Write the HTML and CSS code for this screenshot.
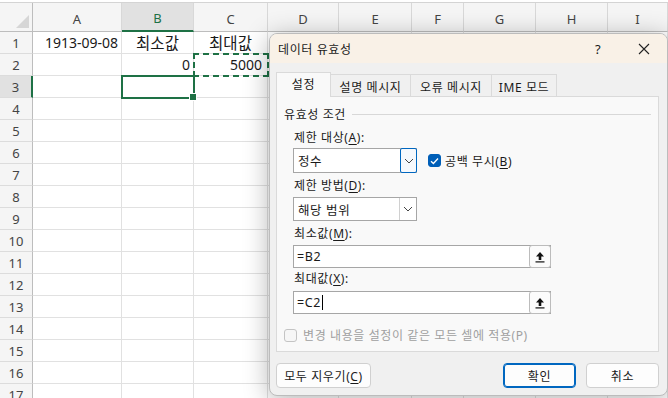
FILE: index.html
```html
<!DOCTYPE html>
<html lang="ko">
<head>
  <meta charset="UTF-8" />
  <title>데이터 유효성</title>
  <link rel="stylesheet" href="styles.css">
</head>
<body>
  <!-- Worksheet grid (filled by the script below) -->
  <div class="sheet"></div>

  <!-- Data validation dialog -->
  <div class="dialog">
    <div class="titlebar">
      <span class="title">데이터 유효성</span>
      <span class="title-btn">?</span>
      <span class="title-btn">
        <svg width="12" height="12" viewBox="0 0 12 12"><path d="M1 1 L11 11 M11 1 L1 11" stroke="#222" stroke-width="1.1" fill="none"/></svg>
      </span>
    </div>

    <div class="tabs">
      <div class="tab active" style="width:55px">설정</div>
      <div class="tab" style="width:80px">설명 메시지</div>
      <div class="tab" style="width:81px">오류 메시지</div>
      <div class="tab" style="width:65px">IME 모드</div>
    </div>

    <div class="panel">
      <div class="group-title"><span>유효성 조건</span><span class="rule"></span></div>

      <div class="field-label first">제한 대상(<u>A</u>):</div>
      <div class="combo-row">
        <div class="combo focus">
          <span class="combo-text">정수</span>
          <span class="combo-btn">
            <svg width="10" height="6" viewBox="0 0 10 6"><path d="M1 1 L5 5 L9 1" stroke="#444" stroke-width="1" fill="none"/></svg>
          </span>
        </div>
        <label class="check">
          <span class="box checked">
            <svg width="9" height="8" viewBox="0 0 9 8"><path d="M1 4.2 L3.4 6.5 L8 1.5" stroke="#fff" stroke-width="1.3" fill="none"/></svg>
          </span>
          <span>공백 무시(<u>B</u>)</span>
        </label>
      </div>

      <div class="field-label">제한 방법(<u>D</u>):</div>
      <div class="combo short">
        <span class="combo-text">해당 범위</span>
        <span class="combo-btn">
          <svg width="10" height="6" viewBox="0 0 10 6"><path d="M1 1 L5 5 L9 1" stroke="#444" stroke-width="1" fill="none"/></svg>
        </span>
      </div>

      <div class="field-label">최소값(<u>M</u>):</div>
      <div class="ref-input">
        <span class="ref-text">=B2</span>
        <span class="ref-btn">
          <svg width="12" height="12" viewBox="0 0 12 12"><path d="M6 1 L10 5.5 H7.3 V9 H4.7 V5.5 H2 Z" fill="#111"/><rect x="1.5" y="10.3" width="9" height="1.2" fill="#111"/></svg>
        </span>
      </div>

      <div class="field-label tight">최대값(<u>X</u>):</div>
      <div class="ref-input second">
        <span class="ref-text">=C2<span class="caret"></span></span>
        <span class="ref-btn">
          <svg width="12" height="12" viewBox="0 0 12 12"><path d="M6 1 L10 5.5 H7.3 V9 H4.7 V5.5 H2 Z" fill="#111"/><rect x="1.5" y="10.3" width="9" height="1.2" fill="#111"/></svg>
        </span>
      </div>

      <label class="check disabled">
        <span class="box"></span>
        <span>변경 내용을 설정이 같은 모든 셀에 적용(P)</span>
      </label>
    </div>

    <div class="footer">
      <button class="btn wide">모두 지우기(<u>C</u>)</button>
      <span class="spacer"></span>
      <button class="btn primary">확인</button>
      <button class="btn">취소</button>
    </div>
  </div>

  <script>
    // Build the worksheet: column headers, row headers and cells.
    const cols = ['A', 'B', 'C', 'D', 'E', 'F', 'G', 'H', 'I'];
    const data = {
      A1: { text: '1913-09-08', align: 'right' },
      B1: { text: '최소값', align: 'center', kr: true },
      C1: { text: '최대값', align: 'center', kr: true },
      B2: { text: '0', align: 'right' },
      C2: { text: '5000', align: 'right' }
    };
    let html = '<div class="corner"><span class="corner-tri"></span></div>';
    cols.forEach(c => {
      html += `<div class="col-head${c === 'B' ? ' active' : ''}">${c}</div>`;
    });
    for (let r = 1; r <= 17; r++) {
      html += `<div class="row-head${r === 3 ? ' active' : ''}">${r}</div>`;
      cols.forEach(c => {
        const key = c + r;
        const cell = data[key];
        let cls = 'cell';
        if (cell) cls += ' ' + cell.align + (cell.kr ? ' kr' : '');
        if (key === 'B3') cls += ' selected';
        if (key === 'C2') cls += ' copied';
        html += `<div class="${cls}">${cell ? cell.text : ''}</div>`;
      });
    }
    document.querySelector('.sheet').innerHTML = html;
  </script>
</body>
</html>
```

FILE: styles.css
```css
* {
  box-sizing: border-box;
}
body {
  margin: 0;
  width: 668px;
  height: 398px;
  overflow: hidden;
  background: #fff;
  font-family: "Noto Sans", "Noto Sans CJK KR", sans-serif;
  color: #1a1a1a;
}

/* Worksheet */
.sheet {
  margin-top: 2px;
  border-top: 1px solid #d4d4d4;
  display: grid;
  grid-template-columns: 33px 89px 72px 74px 71px 73px 52px 72px 72px 60px;
  grid-template-rows: 29px;
  grid-auto-rows: 22px;
  font-size: 14px;
}
.corner,
.col-head,
.row-head {
  background: #f5f5f5;
  color: #444;
  font-size: 13px;
  display: flex;
  align-items: center;
  justify-content: center;
}
.corner {
  position: relative;
  border-right: 1px solid #bdbdbd;
  border-bottom: 1px solid #bdbdbd;
}
.corner-tri {
  position: absolute;
  right: 3px;
  bottom: 3px;
  width: 0;
  height: 0;
  border-left: 13px solid transparent;
  border-bottom: 13px solid #d6d6d6;
}
.col-head {
  border-right: 1px solid #d8d8d8;
  border-bottom: 1px solid #bdbdbd;
  padding-top: 3px;
}
.col-head.active {
  background: #e1e1e1;
  color: #1e7145;
  border-bottom: 2px solid #1e7145;
}
.row-head {
  border-right: 1px solid #bdbdbd;
  border-bottom: 1px solid #dcdcdc;
}
.row-head.active {
  background: #e1e1e1;
  border-right: 2px solid #1e7145;
}
.cell {
  border-right: 1px solid #e1e1e1;
  border-bottom: 1px solid #e1e1e1;
  display: flex;
  align-items: center;
  padding: 0 3px;
  white-space: nowrap;
}
.cell.right {
  justify-content: flex-end;
}
.cell.center {
  justify-content: center;
}
.cell.kr {
  font-size: 15.5px;
}
.cell.selected {
  position: relative;
  z-index: 1;
  outline: 2px solid #1e7145;
  outline-offset: -1px;
}
.cell.selected::after {
  content: "";
  position: absolute;
  right: -4px;
  bottom: -4px;
  width: 6px;
  height: 6px;
  background: #1e7145;
  border: 1px solid #fff;
}
.cell.copied {
  position: relative;
  z-index: 1;
  outline: 2px dashed #1e7145;
  outline-offset: -1px;
  padding-right: 5px;
}

/* Dialog window */
.dialog {
  position: absolute;
  left: 269px;
  top: 33px;
  width: 399px;
  height: 363px;
  background: #f0f0f0;
  border: 1px solid #bcbcbc;
  border-radius: 8px;
  box-shadow: 0 4px 26px rgba(0, 0, 0, 0.3);
  padding: 0 8px 0 6px;
  font-size: 12px;
  letter-spacing: 0.6px;
  z-index: 5;
  display: flex;
  flex-direction: column;
}
.titlebar {
  height: 29px;
  margin: 0 -8px 0 -6px;
  background: #f9f1e7;
  border-radius: 7px 7px 0 0;
  display: flex;
  align-items: center;
  padding-left: 8px;
}
.title {
  flex: 1;
}
.title-btn {
  width: 46px;
  height: 29px;
  display: flex;
  align-items: center;
  justify-content: center;
  font-size: 13px;
}

/* Tabs */
.tabs {
  margin-top: 9px;
  display: flex;
  align-items: flex-end;
  position: relative;
  z-index: 1;
  margin-bottom: -1px;
}
.tab {
  height: 23px;
  border: 1px solid #dadada;
  border-bottom: none;
  border-left: none;
  display: flex;
  align-items: center;
  justify-content: center;
  padding-top: 1px;
}
.tab.active {
  height: 25px;
  background: #f9f9f9;
  border-left: 1px solid #dadada;
  padding-top: 0;
  padding-bottom: 2px;
}

.panel {
  background: #f9f9f9;
  border: 1px solid #dadada;
  height: 256px;
  padding: 9px 7px 0 7px;
}
.group-title {
  display: flex;
  align-items: center;
  height: 16px;
}
.rule {
  flex: 1;
  height: 1px;
  background: #d8d8d8;
  margin-left: 6px;
}
.field-label {
  margin: 5px 0 0 10px;
  height: 16px;
  line-height: 16px;
}
.field-label.first {
  margin-top: 8px;
}
.field-label.tight {
  margin-top: 3px;
}

.combo-row {
  display: flex;
  align-items: center;
  margin: 2px 0 0 9px;
}
.combo {
  width: 124px;
  height: 25px;
  background: #fff;
  border: 1px solid #a6a6a6;
  display: flex;
  align-items: stretch;
}
.combo.short {
  height: 24px;
  margin: 3px 0 0 9px;
}
.combo-text {
  flex: 1;
  padding-left: 4px;
  display: flex;
  align-items: center;
  font-size: 12.5px;
}
.combo-btn {
  width: 17px;
  border-left: 1px solid #d0d0d0;
  display: flex;
  align-items: center;
  justify-content: center;
}
.combo.focus .combo-btn {
  border: 1px solid #0067c0;
  border-radius: 2px;
  margin: -1px -1px -1px 0;
  background: #f6f9fd;
}

.check {
  display: flex;
  align-items: center;
  gap: 4px;
  margin-left: 11px;
}
.box {
  width: 13px;
  height: 13px;
  border-radius: 3px;
  border: 1px solid #c4c4c4;
  background: #f6f6f6;
  display: flex;
  align-items: center;
  justify-content: center;
}
.box.checked {
  background: #005fb8;
  border-color: #005fb8;
}
.check.disabled {
  color: #a0a0a0;
  margin: 12px 0 0 0;
  gap: 6px;
}

.ref-input {
  width: 258px;
  height: 23px;
  margin: 3px 0 0 9px;
  background: #fff;
  border: 1px solid #a6a6a6;
  display: flex;
  align-items: stretch;
}
.ref-input.second {
  margin-top: 4px;
}
.ref-text {
  flex: 1;
  display: flex;
  align-items: center;
  padding-left: 3px;
  font-size: 12.5px;
}
.caret {
  display: inline-block;
  width: 1px;
  height: 15px;
  background: #000;
  margin-left: 1px;
}
.ref-btn {
  width: 22px;
  margin: -1px -1px -1px 0;
  border: 1px solid #bcbcbc;
  border-radius: 3px;
  background: #fbfbfb;
  display: flex;
  align-items: center;
  justify-content: center;
}

/* Footer buttons */
.footer {
  margin-top: 11px;
  display: flex;
  gap: 10px;
}
.spacer {
  flex: 1;
}
.btn {
  width: 73px;
  height: 25px;
  background: #fdfdfd;
  border: 1px solid #d0d0d0;
  border-radius: 4px;
  font-family: "Noto Sans", "Noto Sans CJK KR", sans-serif;
  font-size: 12px;
  letter-spacing: 0.6px;
  color: #1a1a1a;
  padding: 0;
}
.btn.wide {
  width: 95px;
}
.btn.primary {
  border-color: #0067c0;
  box-shadow: inset 0 0 0 1px #0067c0;
}
u {
  text-decoration-thickness: 1px;
  text-underline-offset: 2px;
}
```
